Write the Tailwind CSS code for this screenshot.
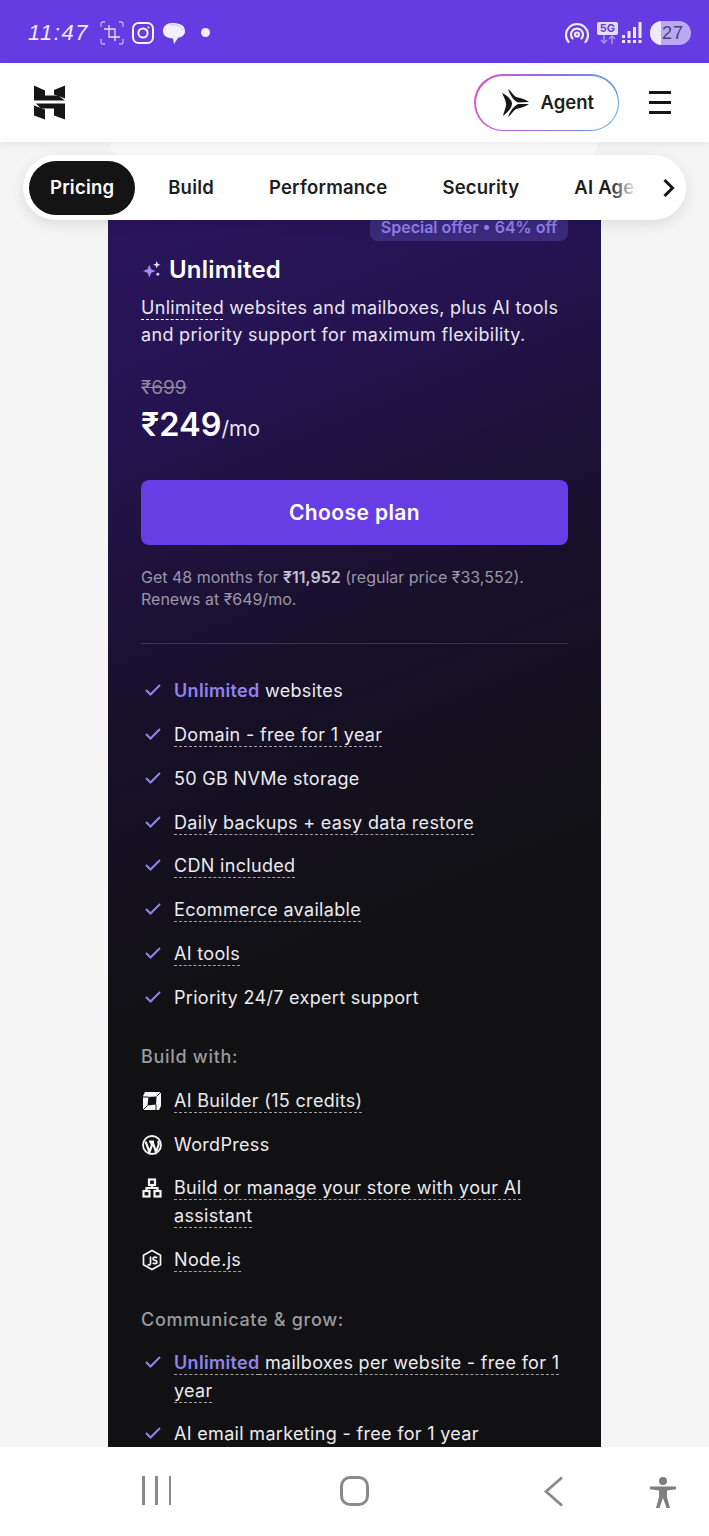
<!DOCTYPE html>
<html lang="en">
<head>
  <meta charset="UTF-8" />
  <meta name="viewport" content="width=device-width, initial-scale=1.0" />
  <title>Unlimited plan</title>
  <script src="https://cdn.jsdelivr.net/npm/@tailwindcss/browser@4"></script>
</head>
<body class="bg-white font-['Inter',sans-serif]">
  <div class="w-[709px] h-[1536px] flex flex-col overflow-hidden">

    <!-- status bar -->
    <div class="h-[63px] shrink-0 bg-[#643ce2] flex items-center pt-[2px] pl-[28px] pr-[18px] text-white">
      <span class="w-[66px] text-[22px] italic font-light tracking-[1.500px] font-['Liberation_Sans',sans-serif] text-[#f1ecff]">11:47</span>
      <svg class="ml-[6px]" width="24" height="24" viewBox="0 0 24 24" fill="none" stroke="#e9e2ff" stroke-width="1.300">
        <path d="M1 6V3q0-2 2-2h2M19 1h2q2 0 2 2v3M23 18v3q0 2-2 2h-2M5 23H3q-2 0-2-2v-3" stroke-opacity=".7"/>
        <path d="M9 4v12h11M4 8h11v12"/>
      </svg>
      <svg class="ml-[8px]" width="22" height="22" viewBox="0 0 22 22" fill="none" stroke="#f6f2ff" stroke-width="2">
        <rect x="1" y="1" width="20" height="20" rx="5.500"/>
        <circle cx="11" cy="11" r="4.600"/>
        <circle cx="16.500" cy="5.500" r="1" fill="#f6f2ff" stroke="none"/>
      </svg>
      <svg class="ml-[9px]" width="22" height="22" viewBox="0 0 22 22" fill="#f3efff">
        <path d="M9 1c7 0 13 2 13 8 0 4-3 6-7 7l-4 6-1-5.500C4 16 0 14 0 9c0-5 4-8 9-8z"/>
        <path d="M7 3c6-1 11 1 13 5" fill="none" stroke="#c9bcf7" stroke-width="1"/>
      </svg>
      <span class="ml-[16px] w-[9px] h-[9px] rounded-full bg-[#f3efff]"></span>

      <div class="ml-auto flex items-center">
        <svg width="24" height="24" viewBox="0 0 24 24" fill="none" stroke="#efeaff" stroke-width="2.200" stroke-linecap="round">
          <path d="M3.500 21A11 11 0 1 1 20.500 21"/>
          <path d="M7.500 17.500A6 6 0 1 1 16.500 17.500"/>
          <circle cx="12" cy="13.500" r="2"/>
        </svg>
        <div class="ml-[8px] w-[21px] flex flex-col items-center">
          <span class="w-[21px] h-[13px] rounded-[2px] bg-[#e6deff] text-[#643ce2] text-[11px] leading-[13px] font-bold text-center">5G</span>
          <svg width="16" height="9" viewBox="0 0 16 9" fill="none" stroke="#a994f2" stroke-width="1.500"><path d="M4 0v8M1 5l3 3 3-3M12 9V1M9 4l3-3 3 3"/></svg>
        </div>
        <svg class="ml-[4px]" width="20" height="22" viewBox="0 0 20 22" fill="#efeaff">
          <rect x="0" y="13" width="3" height="3"/><rect x="0" y="18" width="3" height="3"/>
          <rect x="5.500" y="9" width="3" height="7"/><rect x="5.500" y="18" width="3" height="3"/>
          <rect x="11" y="5" width="3" height="11"/><rect x="11" y="18" width="3" height="3"/>
          <rect x="16.500" y="0" width="3" height="16"/><rect x="16.500" y="18" width="3" height="3"/>
        </svg>
        <div class="ml-[8px] w-[41px] h-[24px] rounded-full bg-[#b9a8f3] overflow-hidden relative flex items-center justify-end pr-[7px]">
          <span class="absolute left-0 top-0 h-full w-[11px] bg-[#efeaff]"></span>
          <span class="relative text-[18px] leading-none font-medium tracking-[1px] text-[#4b4470] font-['Liberation_Sans',sans-serif]">27</span>
        </div>
      </div>
    </div>

    <!-- header -->
    <header class="h-[79px] shrink-0 bg-white flex items-center pl-[34px] pr-[38px] relative z-10 shadow-[0_2px_8px_rgba(0,0,0,0.07)]">
      <svg width="31" height="35" viewBox="34 85.500 31 35" fill="#161616">
        <polygon points="34,86 45,91 45,96 58,96 65,101 34,101"/>
        <polygon points="54,90.500 65,86 65,99 54,95"/>
        <polygon points="36,104 65,104 65,120 54,116 54,109 41,109"/>
        <polygon points="34,106 45,110 45,120 34,116"/>
      </svg>
      <div class="ml-auto w-[145px] h-[57px] rounded-full p-[1.500px] bg-[linear-gradient(100deg,#d85bc8_0%,#9a6ad8_45%,#4fa6ea_100%)]">
        <div class="w-full h-full rounded-full bg-white flex items-center pl-[25px]">
          <svg width="28" height="28" viewBox="0 0 28 28" fill="#161616">
            <path d="M1 4C7 7 11 11 11 14.500C11 19 7 23 2 27C3 22 5.500 18 5 14.500C4.500 11 3 8 1 4z"/>
            <path d="M7 0C10 2 12 6 15 8C19 9 24 10 28 13L17 13.500C13 12 9 6 7 0z"/>
            <path d="M7 28C10 26 12 22 15 20C19 19 24 18 28 15L17 15C13 17 9 22 7 28z"/>
          </svg>
          <span class="ml-[12px] text-[18.500px] font-semibold text-[#1d1e20]">Agent</span>
        </div>
      </div>
      <div class="ml-[30px] w-[22px] flex flex-col gap-[7.500px]">
        <span class="h-[2.500px] bg-[#161616]"></span>
        <span class="h-[2.500px] bg-[#161616]"></span>
        <span class="h-[2.500px] bg-[#161616]"></span>
      </div>
    </header>

    <!-- page -->
    <main class="flex-1 min-h-0 overflow-hidden relative bg-[#f5f5f5]">
      <!-- sticky tabs -->
      <div class="absolute left-[23px] top-[13px] w-[663px] h-[65px] rounded-full bg-white shadow-[0_4px_14px_rgba(0,0,0,0.10)] z-10 flex items-center pl-[6px]">
        <div class="w-[611px] overflow-hidden relative flex items-center text-[18.500px] tracking-[0.200px] font-semibold text-[#1d1e20] whitespace-nowrap">
          <span class="h-[54px] flex items-center px-[21px] rounded-full bg-[#141414] text-white mr-[5.500px]">Pricing</span>
          <span class="px-[27.500px]">Build</span>
          <span class="px-[27.500px]">Performance</span>
          <span class="px-[27.500px]">Security</span>
          <span class="px-[27.500px]">AI Agent</span>
          <span class="absolute right-0 top-0 h-full w-[30px] bg-[linear-gradient(90deg,rgba(255,255,255,0),#ffffff_90%)]"></span>
        </div>
        <svg class="ml-[22px]" width="14" height="20" viewBox="0 0 14 20" fill="none" stroke="#161616" stroke-width="3"><path d="M2.500 2l8 8-8 8"/></svg>
      </div>

      <div class="h-[13px] ml-[110px] bg-[#fbfbfb] rounded-b-[10px] w-[488px]"></div>

      <!-- plan card -->
      <section class="ml-[108px] w-[493px] h-[1400px] pt-[60px] px-[33px] text-white bg-[linear-gradient(158deg,#2c1660_0%,#24134f_18%,#171028_37%,#111113_56%,#111113_100%)]">
        <div class="flex justify-end">
          <span class="h-[26px] w-[198px] rounded-lg bg-[#3b2a7c] text-[#8f7eea] text-[16px] font-semibold text-center leading-[24px]">Special offer • 64% off</span>
        </div>

        <h2 class="mt-[15px] flex items-center text-[24px] leading-[28px] font-semibold tracking-[0.200px]">
          <svg class="ml-[2px] mr-[8px]" width="18" height="18" viewBox="0 0 17 17" fill="#a08ff5">
            <path d="M6 3.500l1.700 4.300 4.300 1.700-4.300 1.700L6 15.500l-1.700-4.300-4.300-1.700 4.300-1.700z"/>
            <path fill="#efeaff" d="M13 0l.9 2.600 2.600.9-2.600.9L13 7l-.9-2.600-2.600-.9 2.600-.9z"/>
            <circle cx="14" cy="12.500" r="1.400" fill="#d5cdfb"/>
          </svg>
          Unlimited
        </h2>

        <p class="mt-[10px] text-[18px] leading-[27px] tracking-[0.320px] text-[#e9e5f3]">
          <span class="underline decoration-dashed decoration-1 underline-offset-[5px] decoration-white">Unlimited</span> websites and mailboxes, plus AI tools and priority support for maximum flexibility.
        </p>

        <p class="mt-[27px] text-[19px] leading-[26px] text-[#8d889d] line-through">₹699</p>
        <p class="mt-[3px] leading-[42px] font-semibold text-[32.500px]">₹249<span class="text-[21px] font-normal text-[#e9e5f3]">/mo</span></p>

        <button class="mt-[30px] w-full h-[65px] rounded-lg bg-[#673de6] text-[21px] tracking-[0.400px] font-semibold text-white">Choose plan</button>

        <p class="mt-[21px] text-[16px] leading-[22px] text-[#9a97a6]">
          Get 48 months for <b class="font-semibold text-[#c5c2cd]">₹11,952</b> (regular price ₹33,552).<br>Renews at ₹649/mo.
        </p>

        <hr class="mt-[33px] border-white/15">

        <!-- features -->
        <ul class="mt-[33px] flex flex-col gap-[15.860px] text-[18px] leading-[28px] tracking-[0.320px] text-[#ecebef]">
          <li class="flex">
            <svg class="ml-[4px] mr-[13px] mt-[6px] shrink-0" width="16" height="14" viewBox="0 0 16 14" fill="none" stroke="#9084ec" stroke-width="2"><path d="M1 7l4.500 4.500L15 2"/></svg>
            <span><span class="font-semibold text-[#9084ec]">Unlimited</span> websites</span>
          </li>
          <li class="flex">
            <svg class="ml-[4px] mr-[13px] mt-[6px] shrink-0" width="16" height="14" viewBox="0 0 16 14" fill="none" stroke="#9084ec" stroke-width="2"><path d="M1 7l4.500 4.500L15 2"/></svg>
            <span class="underline decoration-dashed decoration-1 underline-offset-[5px] decoration-white/60">Domain - free for 1 year</span>
          </li>
          <li class="flex">
            <svg class="ml-[4px] mr-[13px] mt-[6px] shrink-0" width="16" height="14" viewBox="0 0 16 14" fill="none" stroke="#9084ec" stroke-width="2"><path d="M1 7l4.500 4.500L15 2"/></svg>
            <span>50 GB NVMe storage</span>
          </li>
          <li class="flex">
            <svg class="ml-[4px] mr-[13px] mt-[6px] shrink-0" width="16" height="14" viewBox="0 0 16 14" fill="none" stroke="#9084ec" stroke-width="2"><path d="M1 7l4.500 4.500L15 2"/></svg>
            <span class="underline decoration-dashed decoration-1 underline-offset-[5px] decoration-white/60">Daily backups + easy data restore</span>
          </li>
          <li class="flex">
            <svg class="ml-[4px] mr-[13px] mt-[6px] shrink-0" width="16" height="14" viewBox="0 0 16 14" fill="none" stroke="#9084ec" stroke-width="2"><path d="M1 7l4.500 4.500L15 2"/></svg>
            <span class="underline decoration-dashed decoration-1 underline-offset-[5px] decoration-white/60">CDN included</span>
          </li>
          <li class="flex">
            <svg class="ml-[4px] mr-[13px] mt-[6px] shrink-0" width="16" height="14" viewBox="0 0 16 14" fill="none" stroke="#9084ec" stroke-width="2"><path d="M1 7l4.500 4.500L15 2"/></svg>
            <span class="underline decoration-dashed decoration-1 underline-offset-[5px] decoration-white/60">Ecommerce available</span>
          </li>
          <li class="flex">
            <svg class="ml-[4px] mr-[13px] mt-[6px] shrink-0" width="16" height="14" viewBox="0 0 16 14" fill="none" stroke="#9084ec" stroke-width="2"><path d="M1 7l4.500 4.500L15 2"/></svg>
            <span class="underline decoration-dashed decoration-1 underline-offset-[5px] decoration-white/60">AI tools</span>
          </li>
          <li class="flex">
            <svg class="ml-[4px] mr-[13px] mt-[6px] shrink-0" width="16" height="14" viewBox="0 0 16 14" fill="none" stroke="#9084ec" stroke-width="2"><path d="M1 7l4.500 4.500L15 2"/></svg>
            <span>Priority 24/7 expert support</span>
          </li>
        </ul>

        <h3 class="mt-[31px] text-[18px] leading-[28px] tracking-[0.700px] font-medium text-[#9a9a9f]">Build with:</h3>
        <ul class="mt-[16px] flex flex-col gap-[15.500px] text-[18px] leading-[28px] tracking-[0.320px] text-[#ecebef]">
          <li class="flex">
            <svg class="ml-[1px] mr-[12px] mt-[4px] shrink-0" width="20" height="20" viewBox="0 0 20 20">
              <path fill="#f6f6f6" fill-rule="evenodd" d="M3 1H19V15L17 19H1V5zM6.500 6L5.500 14.500L14 13.500L14.500 5.500z"/>
              <path stroke="#111113" stroke-width="1" fill="none" d="M1 6L6.500 6M14.500 5.500L19 1M14 13.500L14 19M5.500 14.500L1 19"/>
            </svg>
            <span class="underline decoration-dashed decoration-1 underline-offset-[5px] decoration-white/60">AI Builder (15 credits)</span>
          </li>
          <li class="flex">
            <svg class="ml-[1px] mr-[12px] mt-[4px] shrink-0" width="20" height="20" viewBox="0 0 20 20" fill="none" stroke="#f4f4f4">
              <circle cx="10" cy="10" r="9" stroke-width="1.800"/>
              <path d="M3.500 6.500l4 10.500 2.500-7-1.500-3.500M7 6.500h5M10.500 6.500l3.500 10.500 2.500-7c.5-1.500 0-3-.5-4" stroke-width="2.200"/>
            </svg>
            <span>WordPress</span>
          </li>
          <li class="flex">
            <svg class="ml-[1px] mr-[12px] mt-[4px] shrink-0" width="20" height="20" viewBox="0 0 20 20" fill="none" stroke="#f4f4f4" stroke-width="2.200">
              <rect x="7" y="1.500" width="6" height="5.500"/><rect x="1.500" y="13" width="6" height="5.500"/><rect x="12.500" y="13" width="6" height="5.500"/>
              <path d="M10 7v3M4.500 13v-3h11v3"/>
            </svg>
            <span class="underline decoration-dashed decoration-1 underline-offset-[5px] decoration-white/60">Build or manage your store with your AI assistant</span>
          </li>
          <li class="flex">
            <svg class="ml-[1px] mr-[12px] mt-[3px] shrink-0" width="20" height="22" viewBox="0 0 20 21" fill="none" stroke="#f4f4f4" stroke-width="1.700">
              <path d="M10 1l8.500 4.800v9.400L10 20l-8.500-4.800V5.800z"/>
              <path d="M8.500 7v7c0 1.500-1.500 1.800-3 1M15 8.500c-1-1.200-4-1.300-4 .7s4 1.300 4 3.300-3 2-4.300.8" stroke-width="1.700"/>
            </svg>
            <span class="underline decoration-dashed decoration-1 underline-offset-[5px] decoration-white/60">Node.js</span>
          </li>
        </ul>

        <h3 class="mt-[32px] text-[18px] leading-[28px] tracking-[0.700px] font-medium text-[#9a9a9f]">Communicate &amp; grow:</h3>
        <ul class="mt-[15px] flex flex-col gap-[15.860px] text-[18px] leading-[28px] tracking-[0.320px] text-[#ecebef]">
          <li class="flex">
            <svg class="ml-[4px] mr-[13px] mt-[6px] shrink-0" width="16" height="14" viewBox="0 0 16 14" fill="none" stroke="#9084ec" stroke-width="2"><path d="M1 7l4.500 4.500L15 2"/></svg>
            <span class="underline decoration-dashed decoration-1 underline-offset-[5px] decoration-white/60"><span class="font-semibold text-[#9084ec]">Unlimited</span> mailboxes per website - free for 1 year</span>
          </li>
          <li class="flex">
            <svg class="ml-[4px] mr-[13px] mt-[6px] shrink-0" width="16" height="14" viewBox="0 0 16 14" fill="none" stroke="#9084ec" stroke-width="2"><path d="M1 7l4.500 4.500L15 2"/></svg>
            <span>AI email marketing - free for 1 year</span>
          </li>
        </ul>
      </section>
    </main>

    <!-- android nav -->
    <nav class="h-[89px] shrink-0 bg-white flex items-start pt-[29px] pl-[142px]">
      <div class="w-[29px] h-[29px] flex justify-between">
        <span class="w-[2.500px] h-full bg-[#8a8a8a]"></span>
        <span class="w-[2.500px] h-full bg-[#8a8a8a]"></span>
        <span class="w-[2.500px] h-full bg-[#8a8a8a]"></span>
      </div>
      <span class="ml-[169px] w-[29px] h-[30px] rounded-[10px] border-[3px] border-[#8a8a8a]"></span>
      <svg class="ml-[174px]" width="21" height="31" viewBox="0 0 21 31" fill="none" stroke="#8a8a8a" stroke-width="2.800"><path d="M19 1.500L3 15.500l16 14"/></svg>
      <svg class="ml-[85px] mt-[1px]" width="28" height="32" viewBox="0 0 28 32" fill="#7f7f7f">
        <circle cx="14" cy="4" r="4"/>
        <path d="M1 9.500h26v2.800l-9 1.200V20l3 11h-3.500L14 21l-3.500 10H7l3-11v-6.500l-9-1.200z"/>
      </svg>
    </nav>
  </div>
</body>
</html>
